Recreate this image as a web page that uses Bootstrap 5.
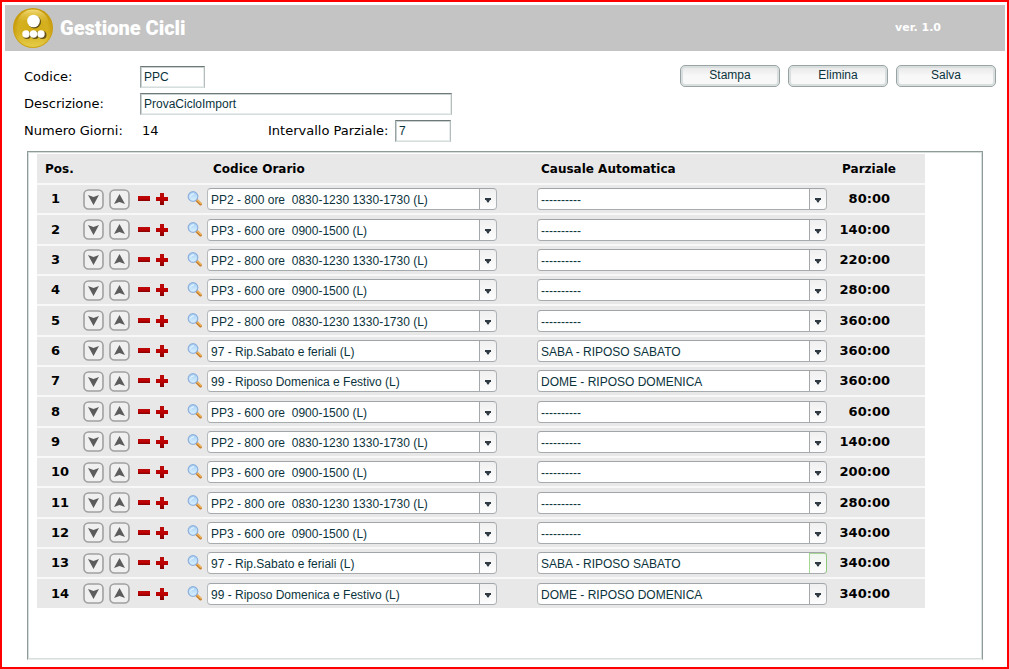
<!DOCTYPE html>
<html lang="it">
<head>
<meta charset="utf-8">
<meta name="viewport" content="width=device-width, initial-scale=1">
<title>Gestione Cicli</title>
<link href="https://cdn.jsdelivr.net/npm/bootstrap@5.3.0/dist/css/bootstrap.min.css" rel="stylesheet">
<style>
body { font: 13px/20px "DejaVu Sans", sans-serif; color: #000; background: #fff; border: 2px solid #f00; padding: 3px 2px 7px 3px; }
.topbar { height: 46px; background: #c4c4c4; padding: 0 64px 0 8px; color: #fff; }
.app-title { font: 900 20px/28px Roboto, sans-serif; margin: 0 0 0 7px; }
.version { font-size: 11px; font-weight: bold; }
.form-zone { padding: 14px 9px 0 19px; }
.fields { gap: 5px; padding-top: 1px; }
.field-row { height: 22px; }
.field-row > label:first-child, .field-name { width: 116px; }
.flat-input { height: 22px; padding: 0 3px; border: 1px solid; border-color: #6f7878 #b4bcbc #d5dddd #99a3a3; box-shadow: inset 1px 1px 0 #c9d1d1, inset -1px -1px 0 #e6ebeb; border-radius: 0; font: 12px/16px "Liberation Sans", sans-serif; color: #0b333c; background: #fff; }
.in-code { width: 65px; }
.in-desc { width: 312px; }
.in-part { width: 56px; }
.day-count { width: 128px; padding-left: 2px; }
.part-label { width: 127px; }
.soft-btn { width: 100px; height: 22px; padding: 0 0 3px; border: 1px solid #9aa3a3; border-radius: 5px; background: linear-gradient(#e6e6e6, #f8f8f8 50%, #f8f8f8); box-shadow: inset 0 0 0 2px #d9dfdf; font: 12px/16px "Liberation Sans", sans-serif; color: #0b333c; }
.panel { margin: 9px 22px 0 22px; padding: 2px 57px 48px 9px; border: 1px solid; border-color: #8e9b98 #8e9b98 #eceeee #8e9b98; box-shadow: inset 1px 1px 0 #d5dddd, inset -1px -1px 0 #d5dddd; }
.cycle { width: 100%; height: 454px; table-layout: fixed; border-collapse: separate; border-spacing: 0; }
.cycle th, .cycle td { background: #e8e8e8; padding: 0; vertical-align: middle; font-weight: bold; }
.cycle thead th { height: 29px; font-size: 12px; }
.cycle tbody th, .cycle tbody td { border-top: 2px solid #f8f8f8; }
.c-pos { width: 46px; }
.c-act { width: 104px; }
.c-part { width: 98px; }
.cycle thead .h-pos { padding-left: 8px; }
.cycle thead .h-code { padding-left: 26px; }
.cycle thead .h-cause { padding-left: 34px; }
.cycle thead .h-part { padding-right: 29px; text-align: right; }
.cycle tbody .d-pos { padding-left: 14px; }
.cycle tbody .d-code { padding-right: 10px; }
.cycle tbody .d-cause { padding-left: 30px; }
.cycle tbody .d-part { padding-right: 35px; text-align: right; }
.icon-btn { display: block; border: 0; padding: 0; background: none; }
.icon-btn svg { display: block; }
.move { margin-right: 5px; }
.minus { margin: 0 6px 0 3px; }
.find { margin-right: 4px; }
.combo { display: block; width: 100%; min-width: 0; height: 22px; padding: 1px 20px 0 3px; appearance: none; border: 1px solid; border-color: #a2a5a7 #b0b3b5 #a8abad #b7babc; border-radius: 4px; font: 12px/20px "Liberation Sans", sans-serif; color: #0b333c;
  background: url("data:image/svg+xml,%3Csvg xmlns='http://www.w3.org/2000/svg' width='17' height='20'%3E%3Cpath d='M0 0H1V20H0z' fill='%23a5a8aa'/%3E%3Cpath d='M6 9H12V11H11L9.500 13.500H8.500L7 11H6z' fill='%232f3a42'/%3E%3C/svg%3E") right top no-repeat, linear-gradient(#f0f0f0, #fdfdfd) right top / 17px 20px no-repeat, #fff; }
.combo.hot { border-right-color: #8fc77b; background-image: url("data:image/svg+xml,%3Csvg xmlns='http://www.w3.org/2000/svg' width='17' height='20'%3E%3Cpath d='M0 0H17V1H1V20H0z' fill='%23a4d894'/%3E%3Cpath d='M6 9H12V11H11L9.500 13.500H8.500L7 11H6z' fill='%232f3a42'/%3E%3C/svg%3E"), linear-gradient(#f0f5ee, #fdfdfd); }
</style>
</head>
<body class="d-flex flex-column min-vh-100">
<svg width="0" height="0" class="position-absolute" aria-hidden="true">
  <defs>
    <linearGradient id="red" x1="0" y1="0" x2="0" y2="1"><stop offset="0" stop-color="#b80d0d"/><stop offset=".5" stop-color="#c00000"/><stop offset="1" stop-color="#850000"/></linearGradient>
    <linearGradient id="glass" x1="0" y1="0" x2="0" y2="1"><stop offset="0" stop-color="#a5d0f6"/><stop offset="1" stop-color="#dcf2ff"/></linearGradient>
  </defs>
  <symbol id="down" viewBox="0 0 21 21"><rect x="1" y="1" width="19" height="19" rx="4.500" fill="#f0f0f0" stroke="#a0a0a0" stroke-width="1.600"/><path d="M5 6L10.500 8L16 6L10.500 16z" fill="#5c5c5c"/></symbol>
  <symbol id="up" viewBox="0 0 21 21"><rect x="1" y="1" width="19" height="19" rx="4.500" fill="#f0f0f0" stroke="#a0a0a0" stroke-width="1.600"/><path d="M5 15L10.500 5L16 15L10.500 13z" fill="#5c5c5c"/></symbol>
  <symbol id="minus" viewBox="0 0 12 12"><path d="M0 3H12V8H0z" fill="url(#red)"/></symbol>
  <symbol id="plus" viewBox="0 0 12 12"><path d="M4 0H8V4H12V8H8V12H4V8H0V4H4z" fill="url(#red)"/></symbol>
  <symbol id="lens" viewBox="0 0 16 16"><path d="M9.500 9L13.500 13" stroke="#c47c2c" stroke-width="3" stroke-linecap="round"/><path d="M10 8.700L14 12.500" stroke="#f2b75c" stroke-width="1.400" stroke-linecap="round"/><circle cx="6" cy="5.500" r="4.800" fill="url(#glass)" stroke="#8fb0dc" stroke-width="1.200"/><path d="M3.300 5.500Q4 2.700 7 2.800" fill="none" stroke="#f2faff" stroke-width="1"/></symbol>
</svg>

<header class="topbar d-flex align-items-center">
  <svg width="40" height="40" viewBox="0 0 40 40" aria-hidden="true">
    <defs>
      <radialGradient id="gold" cx=".5" cy=".55" r=".5"><stop offset="0" stop-color="#d2ac14"/><stop offset=".75" stop-color="#d5b020"/><stop offset="1" stop-color="#c89c0c"/></radialGradient>
      <linearGradient id="shine" x1="0" y1="0" x2="0" y2="1"><stop offset="0" stop-color="#f3dc79"/><stop offset="1" stop-color="#d5b020" stop-opacity=".3"/></linearGradient>
      <linearGradient id="glow" x1="0" y1="0" x2="0" y2="1"><stop offset=".6" stop-color="#e5cc48" stop-opacity="0"/><stop offset="1" stop-color="#e5cc48"/></linearGradient>
    </defs>
    <circle cx="20" cy="20" r="20" fill="url(#gold)"/>
    <circle cx="20" cy="20" r="19" fill="url(#glow)"/>
    <path d="M4 15C6 6 12 1.500 20 1.500S34 6 36 15C28 10 12 10 4 15z" fill="url(#shine)"/>
    <g fill="#65531a"><circle cx="21.500" cy="14" r="6.500"/><circle cx="14" cy="27" r="4"/><circle cx="22" cy="27" r="4"/><circle cx="29.500" cy="27" r="4"/></g>
    <g fill="#fff"><circle cx="20.500" cy="13" r="6.300"/><circle cx="13" cy="26" r="3.700"/><circle cx="20.500" cy="26" r="3.700"/><circle cx="28" cy="26" r="3.700"/></g>
  </svg>
  <h1 class="app-title">Gestione Cicli</h1>
  <span class="version ms-auto">ver. 1.0</span>
</header>

<main class="d-flex flex-column flex-grow-1">
  <form class="form-zone d-flex justify-content-between align-items-start">
    <div class="fields d-flex flex-column">
      <div class="field-row d-flex align-items-center"><label for="codice">Codice:</label><input id="codice" class="flat-input in-code" type="text" value="PPC"></div>
      <div class="field-row d-flex align-items-center"><label for="descrizione">Descrizione:</label><input id="descrizione" class="flat-input in-desc" type="text" value="ProvaCicloImport"></div>
      <div class="field-row d-flex align-items-center"><span class="field-name">Numero Giorni:</span><span class="day-count">14</span><label class="part-label" for="intervallo">Intervallo Parziale:</label><input id="intervallo" class="flat-input in-part" type="text" value="7"></div>
    </div>
    <div class="d-flex gap-2">
      <button type="button" class="soft-btn">Stampa</button>
      <button type="button" class="soft-btn">Elimina</button>
      <button type="button" class="soft-btn">Salva</button>
    </div>
  </form>

  <section class="panel flex-grow-1">
    <table class="cycle">
      <colgroup><col class="c-pos"><col class="c-act"><col><col><col class="c-part"></colgroup>
      <thead><tr><th class="h-pos" scope="col">Pos.</th><th></th><th class="h-code" scope="col">Codice Orario</th><th class="h-cause" scope="col">Causale Automatica</th><th class="h-part" scope="col">Parziale</th></tr></thead>
      <tbody id="days"></tbody>
    </table>
  </section>
</main>

<script src="https://cdn.jsdelivr.net/npm/bootstrap@5.3.0/dist/js/bootstrap.bundle.min.js"></script>
<script>
const codes = {
  PP2: "PP2 - 800 ore\u00a0 0830-1230 1330-1730 (L)",
  PP3: "PP3 - 600 ore\u00a0 0900-1500 (L)",
  97: "97 - Rip.Sabato e feriali (L)",
  99: "99 - Riposo Domenica e Festivo (L)"
};
const causes = { 97: "SABA - RIPOSO SABATO", 99: "DOME - RIPOSO DOMENICA" };
const days = [
  ["PP2", "80:00"], ["PP3", "140:00"], ["PP2", "220:00"], ["PP3", "280:00"], ["PP2", "360:00"], ["97", "360:00"], ["99", "360:00"],
  ["PP3", "60:00"], ["PP2", "140:00"], ["PP3", "200:00"], ["PP2", "280:00"], ["PP3", "340:00"], ["97", "340:00"], ["99", "340:00"]
];
const icon = (name, size) => `<svg width="${size}" height="${size}" aria-hidden="true"><use href="#${name}"/></svg>`;
const button = (name, size, cls, text) => `<button type="button" class="icon-btn ${cls}" aria-label="${text}">${icon(name, size)}</button>`;
document.getElementById("days").innerHTML = days.map(([code, total], i) => `
  <tr>
    <th class="d-pos" scope="row">${i + 1}</th>
    <td><div class="d-flex align-items-center">
      ${button("down", 21, "move", "Sposta giù")}${button("up", 21, "move", "Sposta su")}${button("minus", 12, "minus", "Rimuovi")}${button("plus", 12, "", "Aggiungi")}
    </div></td>
    <td class="d-code"><div class="d-flex align-items-center">
      ${button("lens", 16, "find", "Cerca")}<select class="combo" aria-label="Codice Orario ${i + 1}"><option>${codes[code]}</option></select>
    </div></td>
    <td class="d-cause"><select class="combo ${i === 12 ? "hot" : ""}" aria-label="Causale Automatica ${i + 1}"><option>${causes[code] || "----------"}</option></select></td>
    <td class="d-part">${total}</td>
  </tr>`).join("");
</script>
</body>
</html>
